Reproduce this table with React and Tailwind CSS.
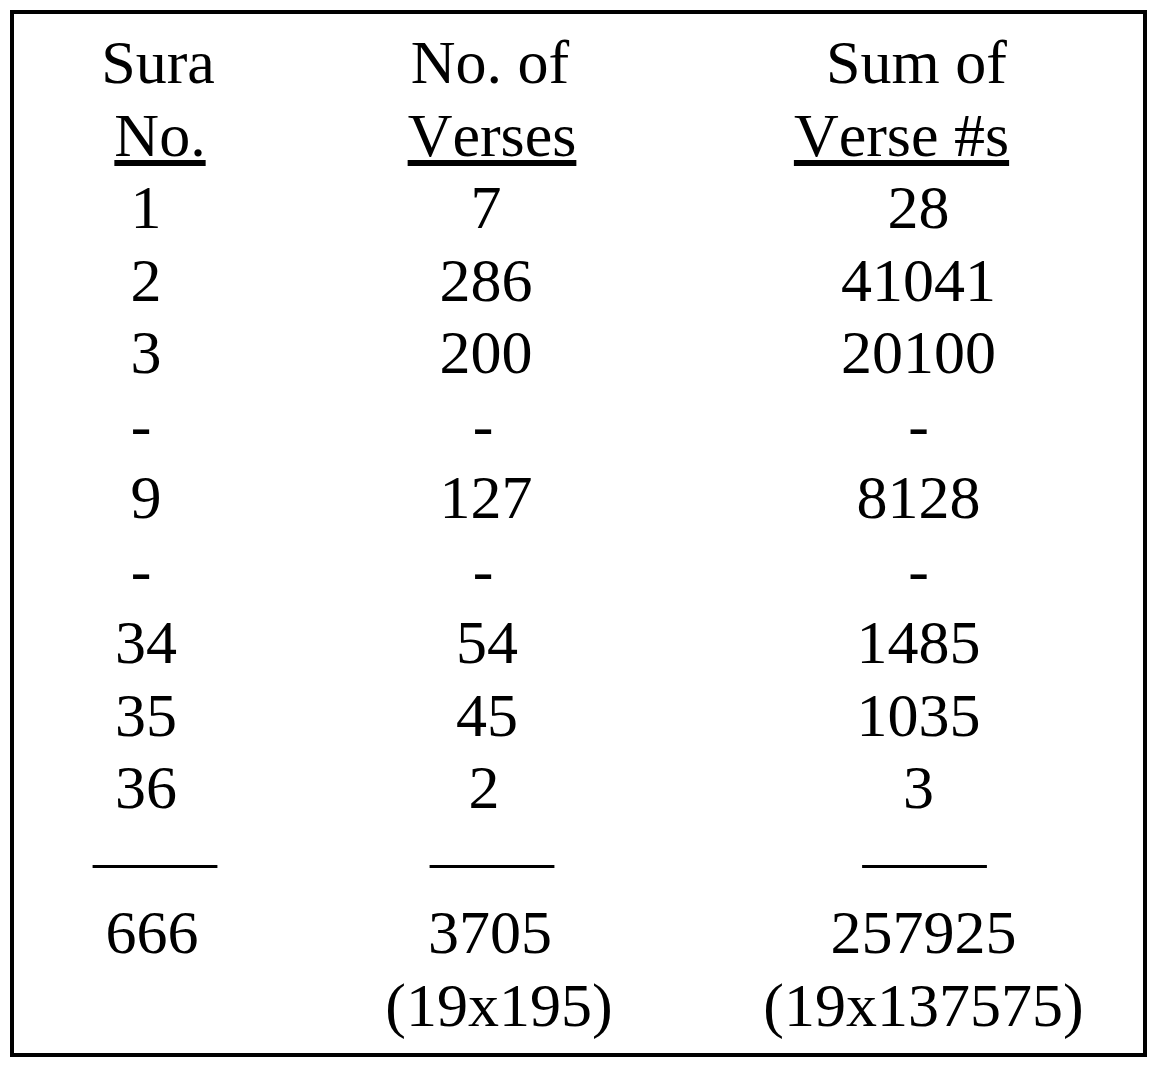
const rows = [
  { cells: ['Sura', 'No. of', 'Sum of'], shift: ['pl-[24px]', 'pl-[8px]', 'pr-[4px]'] },
  { cells: ['No.', 'Verses', 'Verse #s'], underline: true, shift: ['pl-[28px]', 'pl-[12px]', 'pr-[34px]'] },
  { cells: ['1', '7', '28'] },
  { cells: ['2', '286', '41041'] },
  { cells: ['3', '200', '20100'] },
  { cells: ['-', '-', '-'], shift: ['pr-[10px]', 'pr-[6px]', ''] },
  { cells: ['9', '127', '8128'] },
  { cells: ['-', '-', '-'], shift: ['pr-[10px]', 'pr-[6px]', ''] },
  { cells: ['34', '54', '1485'], shift: ['', 'pl-[2px]', ''] },
  { cells: ['35', '45', '1035'], shift: ['', 'pl-[2px]', ''] },
  { cells: ['36', '2', '3'], shift: ['', 'pr-[4px]', ''] },
  { cells: ['——', '——', '——'], shift: ['pl-[18px]', 'pl-[12px]', 'pl-[12px]'] },
  { cells: ['666', '3705', '257925'], shift: ['pl-[12px]', 'pl-[8px]', 'pl-[10px]'] },
  { cells: ['', '(19x195)', '(19x137575)'], shift: ['', 'pl-[26px]', 'pl-[10px]'] },
]

export default function App() {
  return (
    <div className="min-h-screen bg-white p-[10px]">
      <div
        className="w-[1137px] h-[1047px] border-4 border-black px-0 py-[12px] text-black [font-kerning:none]"
        style={{ fontFamily: '"Liberation Serif", "Times New Roman", serif' }}
      >
        {rows.map((row, i) => (
          <div key={i} className="grid grid-cols-[264px_416px_1fr] text-[62px] leading-[72.5px]">
            {row.cells.map((text, j) => (
              <div key={j} className={`text-center whitespace-pre ${row.shift ? row.shift[j] : ''}`}>
                {row.underline ? <span className="underline">{text}</span> : text}
              </div>
            ))}
          </div>
        ))}
      </div>
    </div>
  )
}
